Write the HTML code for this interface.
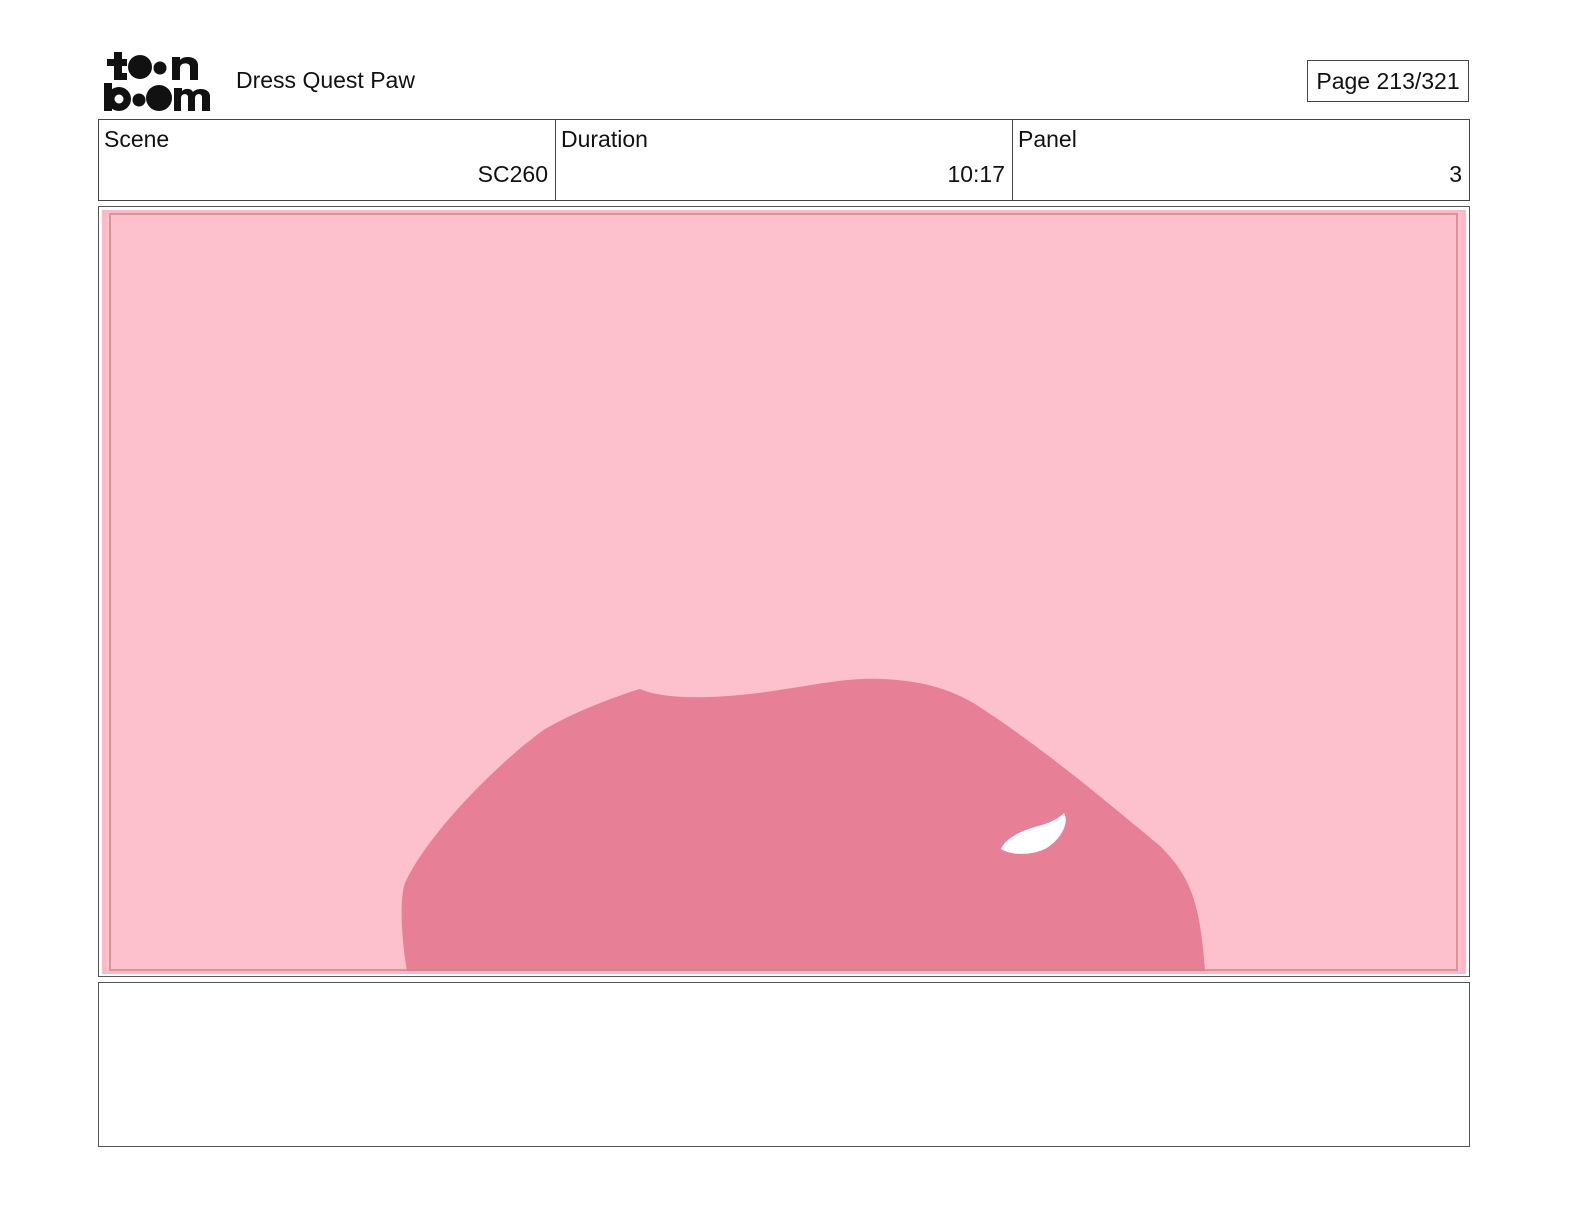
<!DOCTYPE html>
<html style="overflow:hidden"><head><style>
html,body{overflow:hidden}
body{margin:0;width:1584px;height:1224px;background:#fff;position:relative;font-family:"Liberation Sans",sans-serif;color:#111}
.a{position:absolute}
</style></head><body>
<svg class="a" style="left:102px;top:50px" width="114" height="64" viewBox="0 0 114 64">
<g fill="#111">
<rect x="12" y="2" width="8" height="28"/><rect x="5" y="9" width="20" height="7"/><rect x="12" y="23" width="13" height="7"/>
<circle cx="38" cy="17" r="12"/><circle cx="58" cy="18" r="6.5"/>
<path d="M70 30V7h8v3c4-5 18-4 18 5v15h-8V17c0-5-10-5-10 1v12z"/>
<rect x="2" y="33" width="8" height="28"/><circle cx="17" cy="49" r="12"/><circle cx="17" cy="49" r="4.5" fill="#fff"/>
<circle cx="37" cy="50" r="6.5"/><circle cx="57" cy="48" r="13"/>
<path d="M72 61V38h8v3c3-3 9-3 11 1 4-5 17-4 17 4v15h-8V47c0-4-7-4-7 1v13h-7V47c0-4-7-4-7 1v13z"/>
</g></svg>
<div class="a" style="left:236px;top:67px;font-size:23px">Dress Quest Paw</div>
<div class="a" style="left:1307px;top:60px;width:160px;height:40px;border:1px solid #444;font-size:23px;line-height:40px;text-align:center">Page 213/321</div>
<div class="a" style="left:98px;top:119px;width:1370px;height:80px;border:1px solid #444"></div>
<div class="a" style="left:555px;top:119px;width:1px;height:82px;background:#444"></div>
<div class="a" style="left:1012px;top:119px;width:1px;height:82px;background:#444"></div>
<div class="a" style="left:104px;top:126px;font-size:23px">Scene</div>
<div class="a" style="left:561px;top:126px;font-size:23px">Duration</div>
<div class="a" style="left:1018px;top:126px;font-size:23px">Panel</div>
<div class="a" style="left:300px;width:248px;top:161px;font-size:23px;text-align:right">SC260</div>
<div class="a" style="left:760px;width:245px;top:161px;font-size:23px;text-align:right">10:17</div>
<div class="a" style="left:1200px;width:262px;top:161px;font-size:23px;text-align:right">3</div>
<div class="a" style="left:98px;top:206px;width:1372px;height:771px;border:1px solid #555;box-sizing:border-box;overflow:hidden">
<svg width="1370" height="770" viewBox="99 206 1370 770" style="display:block">
<rect x="102" y="209" width="1364" height="764" fill="#fcb8c6"/>
<rect x="106" y="212" width="1355" height="758" fill="#fdc1cd"/>
<path d="M407 970C400 930 400 890 406 880C430 830 500 760 545 728C580 708 620 694 640 688C660 697 700 698 740 694C800 688 840 676 880 678C920 679 950 688 975 703C1040 745 1100 795 1160 845C1190 875 1200 900 1205 970Z" fill="#e77f96"/>
<path d="M1001 848C1005 838 1020 830 1035 826C1050 822 1058 818 1064 812C1070 822 1060 840 1045 848C1030 855 1010 854 1001 848Z" fill="#fff"/>
<rect x="110" y="213" width="1347" height="756" fill="none" stroke="#c88" stroke-width="2" opacity=".8"/>
</svg></div>
<div class="a" style="left:98px;top:982px;width:1370px;height:163px;border:1px solid #555"></div>
</body></html>
